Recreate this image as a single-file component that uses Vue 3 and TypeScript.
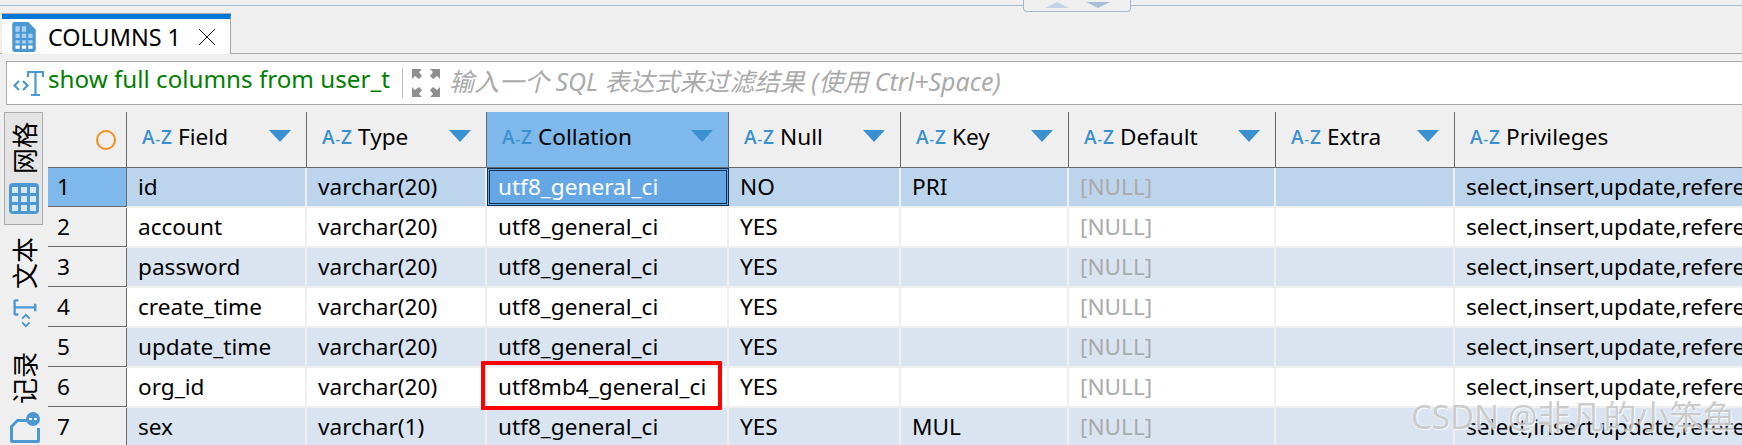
<script setup lang="ts">
interface Row {
  field: string;
  type: string;
  collation: string;
  nullable: string;
  key: string;
}

const columns = ['Field', 'Type', 'Collation', 'Null', 'Key', 'Default', 'Extra', 'Privileges'];

const rows: Row[] = [
  { field: 'id', type: 'varchar(20)', collation: 'utf8_general_ci', nullable: 'NO', key: 'PRI' },
  { field: 'account', type: 'varchar(20)', collation: 'utf8_general_ci', nullable: 'YES', key: '' },
  { field: 'password', type: 'varchar(20)', collation: 'utf8_general_ci', nullable: 'YES', key: '' },
  { field: 'create_time', type: 'varchar(20)', collation: 'utf8_general_ci', nullable: 'YES', key: '' },
  { field: 'update_time', type: 'varchar(20)', collation: 'utf8_general_ci', nullable: 'YES', key: '' },
  { field: 'org_id', type: 'varchar(20)', collation: 'utf8mb4_general_ci', nullable: 'YES', key: '' },
  { field: 'sex', type: 'varchar(1)', collation: 'utf8_general_ci', nullable: 'YES', key: 'MUL' },
];

const privileges = 'select,insert,update,references';
</script>

<template>
  <div class="page">
    <div class="top-strip">
      <div class="handle">
        <span class="arrow-up"></span>
        <span class="arrow-down"></span>
      </div>
    </div>

    <div class="tabs">
      <div class="tab">
        <svg class="tab-icon" width="26" height="32" viewBox="1 1 24 30">
          <path d="M2 4a2 2 0 0 1 2-2h13l7 7v19a2 2 0 0 1-2 2H4a2 2 0 0 1-2-2z" fill="#4b98d3" />
          <path d="M5 6h4v5H5zM11 6h4v5h-4zM5 13h4v4H5zM11 13h4v4h-4zM17 13h4v4h-4zM5 19h4v3H5zM11 19h4v3h-4zM17 19h4v3h-4z" fill="#a9d0ee" />
          <path d="M5 24h4v3H5zM11 24h4v3h-4zM17 24h4v3h-4z" fill="#fff" />
        </svg>
        <span class="tab-title">COLUMNS 1</span>
        <svg class="tab-close" width="18" height="18" viewBox="0 0 18 18">
          <path d="M1 1l16 16M17 1L1 17" stroke="#111" stroke-width="1" fill="none" />
        </svg>
      </div>
    </div>

    <div class="filter">
      <svg class="filter-icon" width="32" height="30" viewBox="0 0 32 30">
        <path d="M6 13l-4.500 4.500L6 22M10 13l4.500 4.500L10 22" stroke="#4b98d3" stroke-width="2.200" fill="none" />
        <path d="M14 4h17M22.500 4v23M18 27h9M15 4v5M30 4v5" stroke="#4b98d3" stroke-width="2.200" fill="none" />
      </svg>
      <span class="sql">show full columns from user_t</span>
      <span class="filter-sep"></span>
      <svg class="expand-icon" width="30" height="30" viewBox="0 0 30 30">
        <path d="M1 1h10l-3 3 3 4-3 3-4-3-3 3zM29 1H19l3 3-3 4 3 3 4-3 3 3zM1 29h10l-3-3 3-4-3-3-4 3-3-3zM29 29H19l3-3-3-4 3-3 4 3 3-3z" fill="#8f8f8f" />
      </svg>
      <span class="placeholder">输入一个 SQL 表达式来过滤结果 (使用 Ctrl+Space)</span>
    </div>

    <div class="body">
      <div class="side">
        <div class="side-active">
          <span class="side-text">网格</span>
          <svg class="side-grid" width="30" height="31" viewBox="0 0 30 31">
            <rect width="30" height="31" rx="4" fill="#4b98d3" />
            <path d="M3 4h6v6H3zM12 4h6v6h-6zM21 4h6v6h-6zM3 13h6v6H3zM12 13h6v6h-6zM21 13h6v6h-6zM3 22h6v6H3zM12 22h6v6h-6zM21 22h6v6h-6z" fill="#d6e8f6" />
          </svg>
        </div>
        <span class="side-text text-tab">文本</span>
        <svg class="side-text-icon" width="30" height="32" viewBox="0 0 32 30">
          <g transform="rotate(-90 16 15)">
            <path d="M7 13l-4 4 4 4M11 13l4 4-4 4" stroke="#4b98d3" stroke-width="2" fill="none" />
            <path d="M15 5h16M23 5v22M19 27h8M15.500 5v4M30.500 5v4" stroke="#4b98d3" stroke-width="2.500" fill="none" />
          </g>
        </svg>
        <span class="side-text record-tab">记录</span>
        <svg class="side-record" width="32" height="32" viewBox="0 0 32 32">
          <path d="M2 14l7-7h12v3H10l-5 5v13h24V16h3v13a2 2 0 0 1-2 2H4a2 2 0 0 1-2-2z" fill="#4b98d3" />
          <circle cx="25" cy="7" r="7" fill="#4b98d3" />
          <path d="M21 7h3M26 7h3" stroke="#fff" stroke-width="2" />
        </svg>
      </div>

      <div class="grid">
        <div class="head-row">
          <div class="head-corner"><span class="circle"></span></div>
          <div
            v-for="col in columns"
            :key="col"
            class="head-cell"
            :class="{ selected: col === 'Collation', last: col === 'Privileges' }"
          >
            <span class="az">A<i>-</i>Z</span>
            <span class="head-name">{{ col }}</span>
            <span v-if="col !== 'Privileges'" class="sort"></span>
          </div>
        </div>

        <div
          v-for="(row, i) in rows"
          :key="row.field"
          class="row"
          :class="{ current: i === 0, odd: i > 0 && i % 2 === 0 }"
        >
          <div class="num">{{ i + 1 }}</div>
          <div class="cell">{{ row.field }}</div>
          <div class="cell">{{ row.type }}</div>
          <div class="cell" :class="{ focus: i === 0 }">{{ row.collation }}</div>
          <div class="cell">{{ row.nullable }}</div>
          <div class="cell">{{ row.key }}</div>
          <div class="cell null">[NULL]</div>
          <div class="cell"></div>
          <div class="cell last">{{ privileges }}</div>
        </div>
      </div>
    </div>

    <div class="mark"></div>
    <div class="watermark">CSDN @非凡的小笨鱼</div>
  </div>
</template>

<style scoped>
.page {
  position: relative;
  width: 1742px;
  height: 445px;
  overflow: hidden;
  background: #efefef;
  font-family: "Noto Sans", "Noto Sans CJK SC", sans-serif;
  font-size: 22.6px;
  color: #000;
}

.top-strip {
  height: 6px;
  border-bottom: 1px solid #a5b8d0;
  box-sizing: border-box;
}

.handle {
  position: absolute;
  left: 1023px;
  top: 0;
  width: 108px;
  height: 12px;
  box-sizing: border-box;
  border: 1px solid #a5b8d0;
  border-top: none;
  border-radius: 0 0 4px 4px;
  background: #efefef;
  display: flex;
  justify-content: center;
  gap: 17px;
  padding-top: 2px;
}

.arrow-up,
.arrow-down {
  width: 0;
  height: 0;
  border-left: 12px solid transparent;
  border-right: 12px solid transparent;
}

.arrow-up {
  border-bottom: 6px solid #c3d3e6;
}

.arrow-down {
  border-top: 6px solid #a9bfd9;
}

.tabs {
  height: 48px;
  box-sizing: border-box;
  padding-top: 8px;
  border-bottom: 1px solid #a8a8a8;
  display: flex;
}

.tab {
  width: 229px;
  height: 40px;
  margin-left: 2px;
  box-sizing: border-box;
  background: #fff;
  border-top: 5px solid #0078d7;
  border-right: 1px solid #a8a8a8;
  box-shadow: 0 -1px 0 #a8a8a8;
  display: flex;
  align-items: center;
  padding-left: 9px;
  position: relative;
  z-index: 1;
}

.tab-title {
  margin-left: 11px;
  font-size: 23.4px;
  line-height: 30px;
}

.tab-close {
  margin-left: auto;
  margin-right: 14px;
}

.filter {
  margin: 7px 0 0 6px;
  height: 44px;
  box-sizing: border-box;
  border: 1px solid #aaa;
  border-right: none;
  background: #fff;
  display: flex;
  align-items: center;
  padding-left: 6px;
}

.filter-icon {
  flex: none;
  margin-right: 3px;
}

.sql {
  color: #008000;
  font-size: 24.2px;
  line-height: 30px;
  margin-top: -8px;
}

.filter-sep {
  width: 1px;
  height: 30px;
  background: #bbb;
  margin: 0 8px 0 12px;
}

.expand-icon {
  flex: none;
}

.placeholder {
  margin-left: 8px;
  margin-top: -4px;
  color: #aaa;
  font-style: italic;
  font-size: 25px;
  line-height: 30px;
  white-space: nowrap;
}

.body {
  display: flex;
  margin-top: 7px;
}

.side {
  width: 39px;
  margin-left: 4px;
  display: flex;
  flex-direction: column;
  align-items: center;
}

.side-active {
  width: 39px;
  height: 113px;
  box-sizing: border-box;
  background: #e4e4e4;
  border: 1px solid #aaa;
  display: flex;
  flex-direction: column;
  align-items: center;
  padding-top: 9px;
}

.side-text {
  writing-mode: vertical-rl;
  text-orientation: sideways;
  transform: rotate(180deg);
  font-size: 26px;
  line-height: 26px;
  font-family: "Noto Sans CJK SC", sans-serif;
}

.side-grid {
  margin-top: 9px;
  flex: none;
}

.text-tab {
  margin-top: 12px;
}

.side-text-icon {
  margin-top: 9px;
  flex: none;
}

.record-tab {
  margin-top: 22px;
}

.side-record {
  margin-top: 8px;
  flex: none;
}

.grid {
  margin-left: 5px;
  display: flex;
  flex-direction: column;
  flex: none;
}

.head-row,
.row {
  display: grid;
  grid-template-columns: 79px 180px 180px 242px 172px 168px 207px 179px 289px;
}

.head-row {
  height: 56px;
  box-sizing: border-box;
  border-bottom: 1px solid #6a6a6a;
}

.head-corner {
  border-right: 1px solid #6a6a6a;
  display: flex;
  justify-content: flex-end;
  align-items: center;
  padding-right: 10px;
}

.circle {
  width: 20px;
  height: 20px;
  box-sizing: border-box;
  border: 2px solid #f58f1b;
  border-radius: 50%;
}

.head-cell {
  border-right: 1px solid #6a6a6a;
  display: flex;
  align-items: center;
  padding-left: 15px;
  position: relative;
}

.head-cell.selected {
  background: #7fb8ea;
}

.head-cell.last {
  border-right: none;
}

.az {
  color: #3b90d0;
  font-size: 19px;
  font-weight: 600;
  font-family: "Open Sans", sans-serif;
  margin-right: 6px;
  margin-top: -6px;
}

.az i {
  font-style: normal;
  font-size: 14px;
  margin: 0 1px;
}

.head-name {
  line-height: 30px;
  margin-top: -6px;
}

.sort {
  position: absolute;
  right: 15px;
  top: 18px;
  width: 0;
  height: 0;
  border-left: 11px solid transparent;
  border-right: 11px solid transparent;
  border-top: 12px solid #3b90d0;
}

.row {
  height: 40px;
  box-sizing: border-box;
  background: #fff;
  border-bottom: 2px solid #efefef;
}

.row .cell {
  height: 38px;
  box-sizing: border-box;
  padding-left: 11px;
  line-height: 38px;
  white-space: nowrap;
  overflow: hidden;
  border-right: 2px solid #efefef;
}

.row .cell.last {
  border-right: none;
}

.row.odd .cell {
  background: #dae4f0;
}

.row.current .cell {
  background: #bdd5ec;
}

.row.current .cell.focus {
  background: #65a7e5;
  color: #fff;
  border: 1px solid #12304d;
  outline: 1px solid #12304d;
  outline-offset: -3px;
  line-height: 36px;
  padding-left: 10px;
}

.num {
  background: #efefef;
  border-right: 1px solid #6a6a6a;
  box-shadow: 0 1px 0 #6a6a6a;
  padding-left: 9px;
  line-height: 38px;
}

.row.current .num {
  background: #7fb8ea;
}

.cell.null {
  color: #aaa;
}

.mark {
  position: absolute;
  left: 481px;
  top: 361px;
  width: 241px;
  height: 49px;
  box-sizing: border-box;
  border: 4px solid #f00;
  border-radius: 1px;
}

.watermark {
  position: absolute;
  left: 1411px;
  top: 391px;
  font-size: 33px;
  white-space: nowrap;
  color: rgba(140, 140, 140, 0.45);
  text-shadow: 0 0 2px #fff, 1px 1px 1px rgba(255, 255, 255, 0.8);
}
</style>
